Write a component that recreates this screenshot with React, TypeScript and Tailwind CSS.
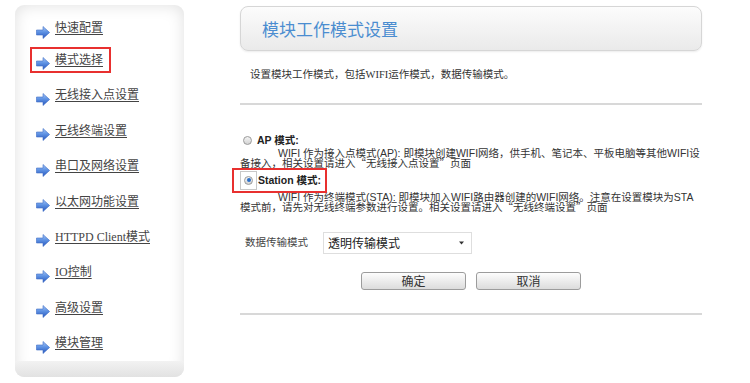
import React from "react";

const Arrow = () => (
  <svg width="14" height="13" viewBox="0 0 14 13" className="mt-[8px] shrink-0">
    <defs>
      <linearGradient id="ag" x1="0" y1="0" x2="0" y2="1">
        <stop offset="0" stopColor="#a8c8f7" />
        <stop offset="0.45" stopColor="#5f93e4" />
        <stop offset="1" stopColor="#2a58bd" />
      </linearGradient>
    </defs>
    <path d="M0.5 4 H7 V0.5 L13.6 6.5 L7 12.5 V9 H0.5 Z" fill="url(#ag)" stroke="#3d6cc6" strokeWidth="0.6" strokeLinejoin="round" />
  </svg>
);

const items = [
  "快速配置",
  "模式选择",
  "无线接入点设置",
  "无线终端设置",
  "串口及网络设置",
  "以太网功能设置",
  "HTTPD Client模式",
  "IO控制",
  "高级设置",
  "模块管理",
];

const Radio = ({ checked }: { checked?: boolean }) => (
  <span className="relative inline-block h-[9px] w-[9px] shrink-0 rounded-full border border-[#9a9a9a] bg-gradient-to-b from-[#f4f4f4] to-[#d4d4d4]">
    {checked && (
      <span className="absolute left-[1.5px] top-[1.5px] h-[4px] w-[4px] rounded-full bg-[#2a6fc9]" />
    )}
  </span>
);

const Q = ({ children }: { children: React.ReactNode }) => (
  <span style={{ fontFamily: '"Noto Sans CJK SC", sans-serif' }}>{children}</span>
);

export default function App() {
  return (
    <div className="flex h-[383px] w-[750px] bg-white" style={{ fontFamily: '"Liberation Serif", "Noto Sans CJK SC", serif' }}>
      {/* Sidebar */}
      <div className="ml-[15px] mt-[5px] flex h-[372px] w-[169px] flex-col overflow-hidden rounded-[9px] bg-white shadow-[inset_0_0_16px_rgba(0,0,0,0.13)]">
        <div className="flex flex-col pl-[15px] pt-[9.7px]">
          {items.map((t, i) => (
            <div key={t} className={`flex items-center ${i === 0 ? "h-[27.6px]" : "h-[35.4px]"}`}>
              <div
                className={`flex h-[26px] items-center gap-[5px] border-2 pl-[4px] pr-[6px] ${
                  i === 1 ? "border-[#e8302f]" : "border-transparent"
                }`}
              >
                <Arrow />
                <span className="text-[12px] leading-[14px] text-[#444] underline underline-offset-2">{t}</span>
              </div>
            </div>
          ))}
        </div>
        <div className="mt-auto h-[18px] bg-gradient-to-b from-[#f2f2f2] to-[#e2e2e2]" />
      </div>

      {/* Main */}
      <div className="ml-[56px] flex w-[462px] flex-col">
        <div className="mt-[6px] flex h-[45px] items-center rounded-[8px] border border-[#d6d6d6] bg-gradient-to-b from-[#fcfcfc] to-[#eaeaea] pl-[21px] shadow-[0_1px_2px_rgba(0,0,0,0.08)]">
          <span className="text-[17px] leading-[20px] text-[#4b8dd0]" style={{ fontFamily: '"Noto Sans CJK SC", sans-serif' }}>
            模块工作模式设置
          </span>
        </div>

        <div className="ml-[10px] mt-[17px] text-[10.5px] leading-[14px] text-[#333]">
          设置模块工作模式，包括WIFI运作模式，数据传输模式。
        </div>

        <div className="mt-[21px] h-[2px] bg-[#d8d8d8]" />

        <div style={{ fontFamily: '"Liberation Sans", "Noto Sans CJK SC", sans-serif' }}>
          <div className="mt-[29px] flex h-[12px] items-center">
            <span className="ml-[3px]">
              <Radio />
            </span>
            <span className="ml-[5px] text-[10.5px] font-bold leading-[12px] text-[#222]">AP 模式:</span>
          </div>
          <div className="mt-[1.75px] text-[10.5px] leading-[10.5px] text-[#333]">
            <div className="whitespace-nowrap pl-[38px]">WIFI 作为接入点模式(AP): 即模块创建WIFI网络，供手机、笔记本、平板电脑等其他WIFI设</div>
            <div className="whitespace-nowrap">
              备接入，相关设置请进入<Q>“无线接入点设置”</Q>页面
            </div>
          </div>

          <div className="relative -ml-[8px] mt-[-1px] flex h-[25px] w-[95px] items-center border-2 border-[#e8302f] pl-[6px]">
            <span className="flex h-[19px] w-[17px] items-center justify-center border border-[#c8c8c8]">
              <Radio checked />
            </span>
            <span className="ml-[1px] text-[10.5px] font-bold leading-[12px] text-[#222]">Station 模式:</span>
          </div>
          <div className="mt-[-1px] text-[10.5px] leading-[10.5px] text-[#333]">
            <div className="whitespace-nowrap pl-[38px]">WIFI 作为终端模式(STA): 即模块加入WIFI路由器创建的WIFI网络。注意在设置模块为STA</div>
            <div className="whitespace-nowrap">
              模式前，请先对无线终端参数进行设置。相关设置请进入<Q>“无线终端设置”</Q>页面
            </div>
          </div>

          <div className="mt-[19px] flex h-[22px] items-center">
            <span className="ml-[5px] w-[78px] text-[10.5px] text-[#444]">数据传输模式</span>
            <div className="flex h-[22px] w-[149px] items-center justify-between border border-[#dedede] bg-white pl-[4px] pr-[7px]">
              <span className="text-[12px] leading-[14px] text-[#222]" style={{ fontFamily: '"Noto Sans CJK SC", sans-serif' }}>透明传输模式</span>
              <svg width="5" height="4" viewBox="0 0 5 4">
                <path d="M0 0.5 H5 L2.5 3.5 Z" fill="#333" />
              </svg>
            </div>
          </div>

          <div className="ml-[121px] mt-[18px] flex gap-[10px]">
            {["确定", "取消"].map((b) => (
              <div
                key={b}
                className="flex h-[18px] w-[105px] items-center justify-center rounded-[3px] border border-[#9c9c9c] bg-gradient-to-b from-[#fdfdfd] to-[#dcdcdc] text-[12px] leading-[14px] text-[#333]"
                style={{ fontFamily: '"Noto Sans CJK SC", sans-serif' }}
              >
                {b}
              </div>
            ))}
          </div>
        </div>

        <div className="mt-[23px] h-[2px] bg-[#d8d8d8]" />
      </div>
    </div>
  );
}
